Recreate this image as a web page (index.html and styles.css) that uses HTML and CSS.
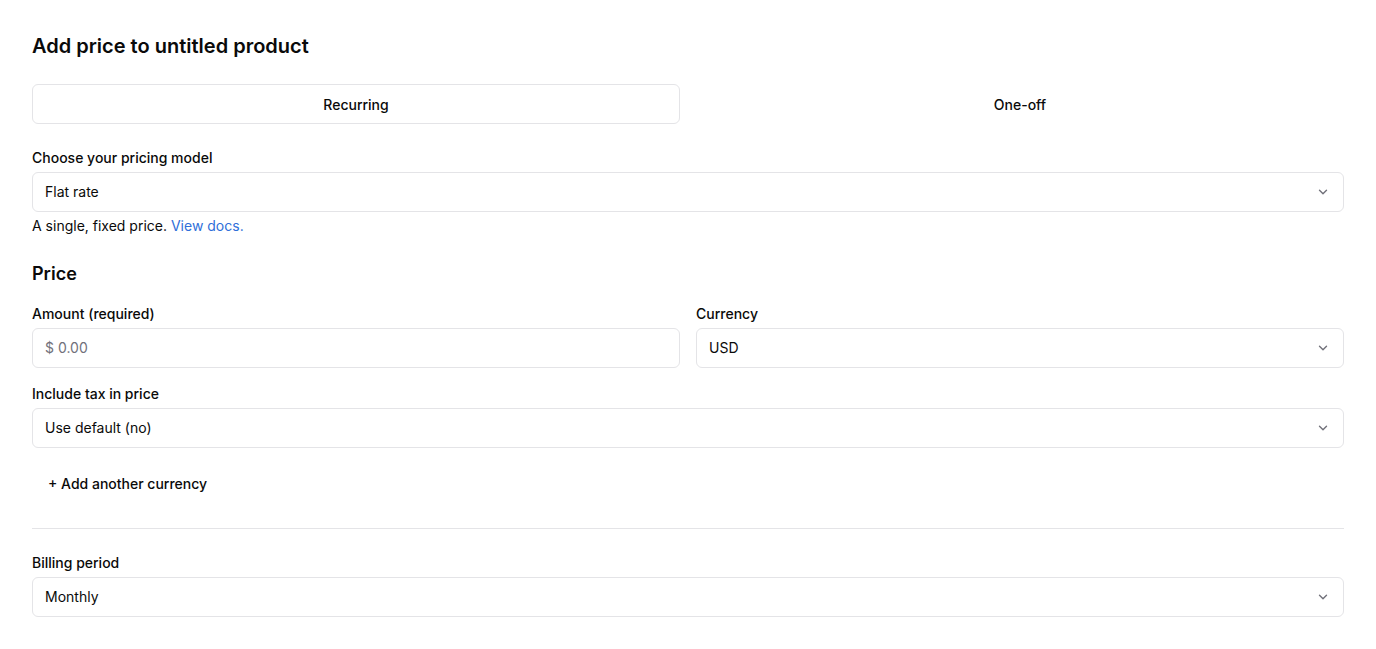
FILE: index.html
```html
<!DOCTYPE html>
<html lang="en">
<head>
<meta charset="utf-8">
<title>Add price</title>
<link rel="stylesheet" href="styles.css">
</head>
<body>
<main class="page">
  <h1 class="title">Add price to untitled product</h1>

  <div class="toggle">
    <button class="toggle-btn active">Recurring</button>
    <button class="toggle-btn">One-off</button>
  </div>

  <div class="field mt24">
    <label class="label">Choose your pricing model</label>
    <div class="select"><span>Flat rate</span><svg class="chev" viewBox="0 0 12 12"><path d="M3 4.5l3 3 3-3" /></svg></div>
    <p class="help">A single, fixed price. <a href="#" class="link">View docs.</a></p>
  </div>

  <h2 class="section">Price</h2>

  <div class="row">
    <div class="field">
      <label class="label">Amount (required)</label>
      <div class="input"><span class="placeholder">$ 0.00</span></div>
    </div>
    <div class="field">
      <label class="label">Currency</label>
      <div class="select"><span>USD</span><svg class="chev" viewBox="0 0 12 12"><path d="M3 4.5l3 3 3-3" /></svg></div>
    </div>
  </div>

  <div class="field mt16">
    <label class="label">Include tax in price</label>
    <div class="select"><span>Use default (no)</span><svg class="chev" viewBox="0 0 12 12"><path d="M3 4.5l3 3 3-3" /></svg></div>
  </div>

  <button class="add-btn">+ Add another currency</button>

  <hr class="divider">

  <div class="field">
    <label class="label">Billing period</label>
    <div class="select"><span>Monthly</span><svg class="chev" viewBox="0 0 12 12"><path d="M3 4.5l3 3 3-3" /></svg></div>
  </div>
</main>
</body>
</html>
```

FILE: styles.css
```css
* { box-sizing: border-box; }
html, body { margin: 0; padding: 0; background: #fff; }
body {
  font-family: Inter, "Noto Sans", sans-serif;
  color: #0a0a0a;
  font-size: 14px;
  line-height: 20px;
}
.page {
  padding: 32px 32px 32px 32px;
  display: flex;
  flex-direction: column;
}
.title {
  margin: 0;
  font-size: 20px;
  line-height: 28px;
  font-weight: 600;
}
.toggle {
  margin-top: 24px;
  display: grid;
  grid-template-columns: 1fr 1fr;
  gap: 16px;
}
.toggle-btn {
  height: 40px;
  border: 1px solid transparent;
  border-radius: 6px;
  background: #fff;
  font-family: inherit;
  font-size: 14px;
  font-weight: 500;
  color: #0a0a0a;
}
.toggle-btn.active {
  border-color: #e4e4e7;
}
.field { display: flex; flex-direction: column; }
.mt24 { margin-top: 24px; }
.mt16 { margin-top: 16px; }
.label {
  font-weight: 500;
  font-size: 14px;
  line-height: 20px;
  margin-bottom: 4px;
}
.select, .input {
  height: 40px;
  border: 1px solid #e4e4e7;
  border-radius: 6px;
  padding: 0 12px;
  display: flex;
  align-items: center;
  justify-content: space-between;
  font-size: 14px;
}
.placeholder { color: #71717a; }
.chev {
  width: 14px;
  height: 14px;
  fill: none;
  stroke: #71717a;
  stroke-width: 1.2;
  stroke-linecap: round;
  stroke-linejoin: round;
  margin-right: 1px;
}
.help {
  margin: 4px 0 0;
}
.link { color: #2f6fd9; text-decoration: none; }
.section {
  margin: 24px 0 16px;
  font-size: 18px;
  line-height: 28px;
  font-weight: 600;
}
.row {
  display: grid;
  grid-template-columns: 1fr 1fr;
  gap: 16px;
}
.add-btn {
  align-self: flex-start;
  margin-top: 16px;
  height: 38px;
  padding: 0 16px;
  border: none;
  background: transparent;
  font-family: inherit;
  font-size: 14px;
  font-weight: 500;
  color: #0a0a0a;
}
.divider {
  margin: 26px 0 24px;
  border: none;
  border-top: 1px solid #e4e4e7;
  width: 100%;
}
```
